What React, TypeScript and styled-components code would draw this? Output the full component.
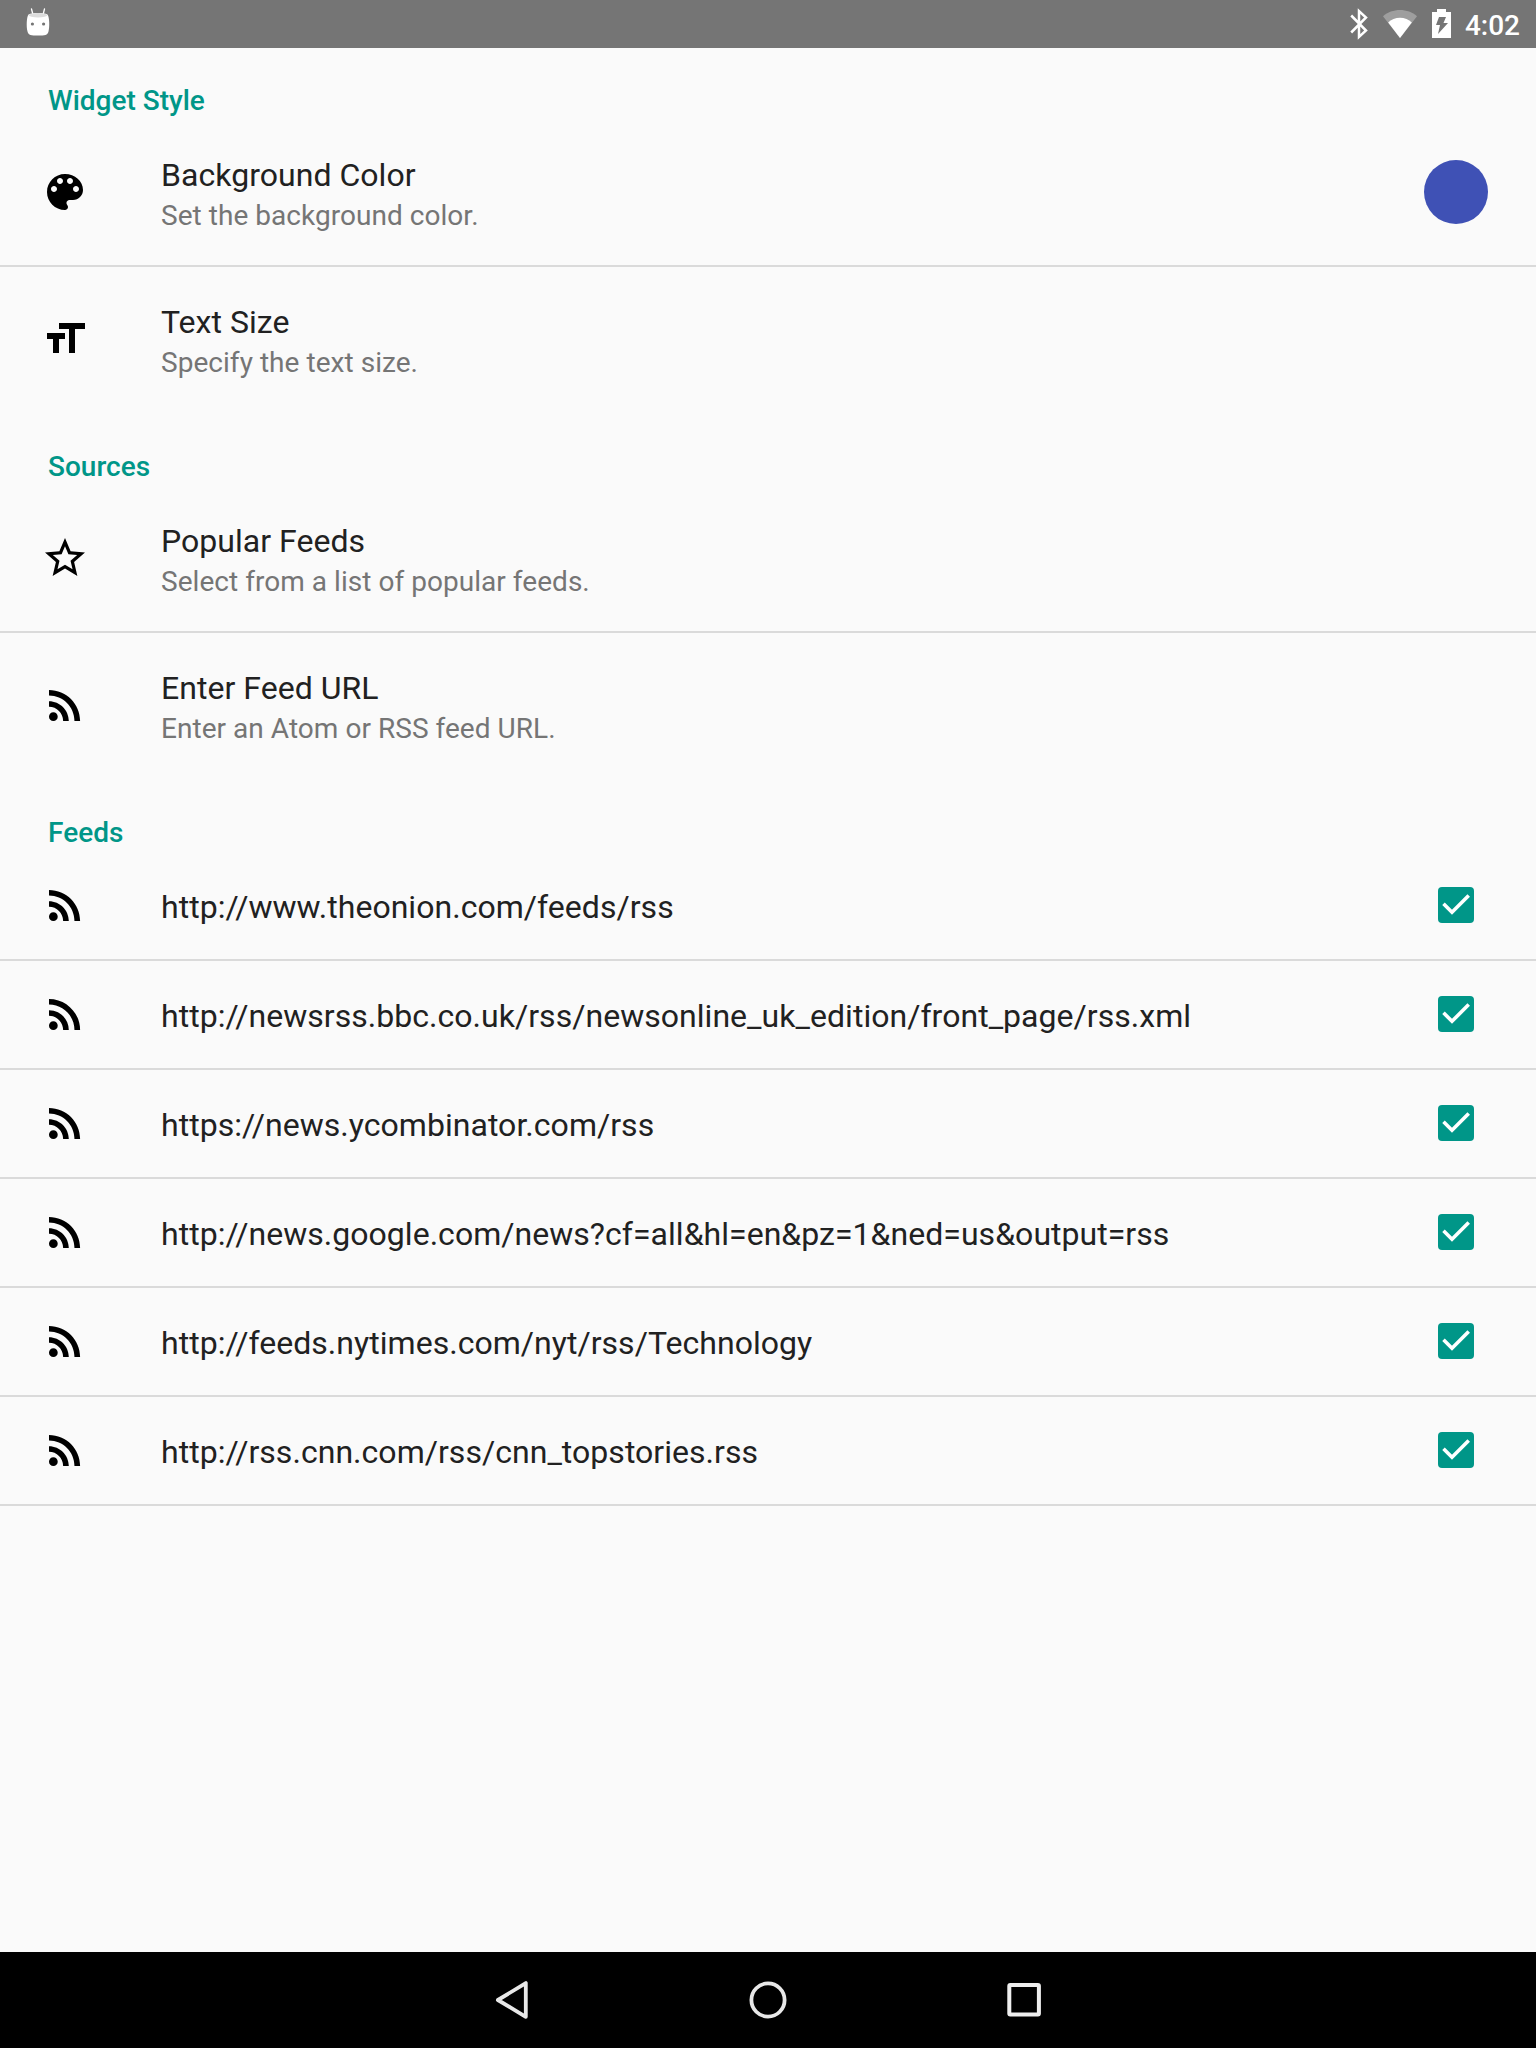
import React from "react";
import styled, { createGlobalStyle } from "styled-components";

const Global = createGlobalStyle`
  * { box-sizing: border-box; }
  body { margin: 0; background: #fafafa; font-family: Roboto, "Noto Sans", sans-serif; }
`;

const Screen = styled.div`
  display: flex;
  flex-direction: column;
  width: 1536px;
  height: 2048px;
  background: #fafafa;
  overflow: hidden;
`;

const StatusBar = styled.header`
  display: flex;
  flex: none;
  align-items: center;
  height: 48px;
  padding: 0 16px 0 26px;
  background: #757575;
  color: #fff;
`;

const Glyph = styled.svg<{ $w: number; $h: number; $gap?: number }>`
  display: block;
  flex: none;
  width: ${(p) => p.$w}px;
  height: ${(p) => p.$h}px;
  margin-right: ${(p) => p.$gap ?? 0}px;
`;

const Spacer = styled.div`
  flex: 1;
`;

const Clock = styled.span`
  padding-top: 2px;
  font-size: 28px;
  font-weight: 500;
  line-height: 33px;
`;

const Content = styled.main`
  flex: 1;
`;

const Section = styled.section`
  padding-bottom: 2px;
`;

const Heading = styled.h2`
  display: flex;
  align-items: flex-end;
  height: 71px;
  margin: 0;
  padding: 0 48px 2px;
  color: #009688;
  font-size: 28px;
  font-weight: 500;
  line-height: 33px;
`;

const Row = styled.div<{ $compact?: boolean }>`
  display: flex;
  align-items: center;
  height: ${(p) => (p.$compact ? 108 : 146)}px;
  padding: 0 48px 0 41px;
`;

const Divider = styled.hr`
  height: 2px;
  margin: 0 0 -1px;
  border: 0;
  background: #dadada;
`;

const Labels = styled.div`
  flex: 1;
  padding-left: 72px;
`;

const Title = styled.div`
  color: #212121;
  font-size: 32px;
  line-height: 38px;
  letter-spacing: 0.035px;
  padding-top: 4px;
`;

const Summary = styled.div`
  color: #757575;
  font-size: 28px;
  line-height: 36px;
  letter-spacing: 0.04px;
  padding-top: 4px;
  margin-bottom: -1px;
`;

const Swatch = styled.div`
  width: 64px;
  height: 64px;
  border-radius: 50%;
  background: #3f51b5;
`;

const CheckBox = styled.div`
  width: 36px;
  height: 36px;
  margin-right: 14px;
  border-radius: 4px;
  background: #009688;
`;

const NavBar = styled.nav`
  display: flex;
  flex: none;
  align-items: center;
  justify-content: center;
  gap: 208px;
  height: 96px;
  background: #000;
`;

const icons = {
  palette:
    "M12 3c-4.97 0-9 4.03-9 9s4.03 9 9 9c.83 0 1.5-.67 1.5-1.5 0-.39-.15-.74-.39-1.01-.23-.26-.38-.61-.38-.99 0-.83.67-1.5 1.5-1.5H16c2.76 0 5-2.24 5-5 0-4.42-4.03-8-9-8zm-5.5 9c-.83 0-1.5-.67-1.5-1.5S5.67 9 6.5 9 8 9.67 8 10.500 7.330 12 6.500 12zm3-4C8.670 8 8 7.330 8 6.500S8.670 5 9.500 5s1.500.670 1.500 1.500S10.330 8 9.500 8zm5 0c-.830 0-1.500-.670-1.500-1.500S13.670 5 14.500 5s1.500.670 1.500 1.500S15.330 8 14.500 8zm3 4c-.830 0-1.500-.670-1.500-1.500S16.670 9 17.500 9s1.500.670 1.500 1.500-.670 1.500-1.500 1.500z",
  size: "M9 4v3h5v12h3V7h5V4H9zm-6 8h3v7h3v-7h3V9H3v3z",
  star: "M22 9.240l-7.190-.620L12 2 9.190 8.630 2 9.240l5.460 4.730L5.820 21 12 17.270 18.180 21l-1.630-7.030L22 9.240zM12 15.400l-3.760 2.270 1-4.280-3.320-2.880 4.380-.380L12 6.100l1.710 4.040 4.380.380-3.320 2.880 1 4.280L12 15.400z",
  rss: "M6.180 15.640a2.180 2.180 0 1 1 0 4.360 2.180 2.180 0 0 1 0-4.360zM4 4.440v2.830c7.030 0 12.730 5.700 12.730 12.730h2.830c0-8.590-6.970-15.560-15.560-15.560zm0 5.660v2.830c3.900 0 7.070 3.170 7.070 7.070h2.830c0-5.470-4.430-9.900-9.900-9.900z",
};

const RowIcon = ({ name }: { name: keyof typeof icons }) => (
  <Glyph $w={48} $h={48} viewBox="0 0 24 24">
    <path d={icons[name]} />
  </Glyph>
);

const Check = () => (
  <CheckBox role="checkbox" aria-checked="true">
    <Glyph $w={36} $h={36} viewBox="0 0 36 36">
      <path d="M5.500 16.800L14 25.300L30.700 8.600" fill="none" stroke="#fff" strokeWidth="3.600" />
    </Glyph>
  </CheckBox>
);

type PreferenceProps = {
  icon: keyof typeof icons;
  title: string;
  summary: string;
  children?: React.ReactNode;
};

const Preference = ({ icon, title, summary, children }: PreferenceProps) => (
  <Row>
    <RowIcon name={icon} />
    <Labels>
      <Title>{title}</Title>
      <Summary>{summary}</Summary>
    </Labels>
    {children}
  </Row>
);

const feeds = [
  "http://www.theonion.com/feeds/rss",
  "http://newsrss.bbc.co.uk/rss/newsonline_uk_edition/front_page/rss.xml",
  "https://news.ycombinator.com/rss",
  "http://news.google.com/news?cf=all&hl=en&pz=1&ned=us&output=rss",
  "http://feeds.nytimes.com/nyt/rss/Technology",
  "http://rss.cnn.com/rss/cnn_topstories.rss",
];

export default function App() {
  return (
    <Screen>
      <Global />
      <StatusBar>
        <Glyph $w={24} $h={48} viewBox="0 0 24 48">
          <path d="M5.500 9l1.300 5M18.500 9l-1.300 5" stroke="#fff" strokeWidth="1.300" strokeLinecap="round" />
          <path d="M2.500 14.500C6 12.500 18 12.500 21.500 14.500C23.500 17 23.800 27 22.500 31.500C21.500 35.500 19 35.500 12 35.500S2.500 35.500 1.500 31.500C.2 27 .5 17 2.500 14.500z" fill="#fff" />
          <ellipse cx="12" cy="15.200" rx="9.300" ry="2.200" fill="#dcdcdc" />
          <circle cx="6.400" cy="24" r="1.600" fill="#757575" />
          <circle cx="17.600" cy="24" r="1.600" fill="#757575" />
        </Glyph>
        <Spacer />
        <Glyph $w={18} $h={48} $gap={15} viewBox="0 0 18 48">
          <path d="M1.200 15.500L16 30.500L9 37V11L16 17.500L1.200 32.500" fill="none" stroke="#fff" strokeWidth="2.500" />
        </Glyph>
        <Glyph $w={34} $h={48} $gap={15} viewBox="0 0 34 48">
          <path d="M17 38L0 16.300C9 8 25 8 34 16.300z" fill="#fff" fillOpacity=".3" />
          <path d="M17 38L5.200 22.500C11 16 23 16 28.800 22.500z" fill="#fff" />
        </Glyph>
        <Glyph $w={19} $h={48} $gap={14} viewBox="0 0 19 48">
          <path d="M5 9h9v3h5v26H0V12h5z" fill="#fff" />
          <path d="M7 17h7l-2.500 6H16L6 34l2-9H4z" fill="#757575" />
        </Glyph>
        <Clock>4:02</Clock>
      </StatusBar>
      <Content>
        <Section>
          <Heading>Widget Style</Heading>
          <Preference icon="palette" title="Background Color" summary="Set the background color.">
            <Swatch />
          </Preference>
          <Divider />
          <Preference icon="size" title="Text Size" summary="Specify the text size." />
        </Section>
        <Section>
          <Heading>Sources</Heading>
          <Preference icon="star" title="Popular Feeds" summary="Select from a list of popular feeds." />
          <Divider />
          <Preference icon="rss" title="Enter Feed URL" summary="Enter an Atom or RSS feed URL." />
        </Section>
        <Section>
          <Heading>Feeds</Heading>
          {feeds.map((url) => (
            <React.Fragment key={url}>
              <Row $compact>
                <RowIcon name="rss" />
                <Labels>
                  <Title>{url}</Title>
                </Labels>
                <Check />
              </Row>
              <Divider />
            </React.Fragment>
          ))}
        </Section>
      </Content>
      <NavBar>
        <Glyph $w={48} $h={48} viewBox="0 0 48 48">
          <path d="M37.800 7.100V40.800L9.900 24z" fill="none" stroke="#e8e8e8" strokeWidth="3.800" strokeLinejoin="round" />
        </Glyph>
        <Glyph $w={48} $h={48} viewBox="0 0 48 48">
          <circle cx="24" cy="24" r="16.600" fill="none" stroke="#e8e8e8" strokeWidth="3.800" />
        </Glyph>
        <Glyph $w={48} $h={48} viewBox="0 0 48 48">
          <rect x="9.300" y="9" width="29.600" height="29.600" rx="1" fill="none" stroke="#eee" strokeWidth="4" />
        </Glyph>
      </NavBar>
    </Screen>
  );
}
